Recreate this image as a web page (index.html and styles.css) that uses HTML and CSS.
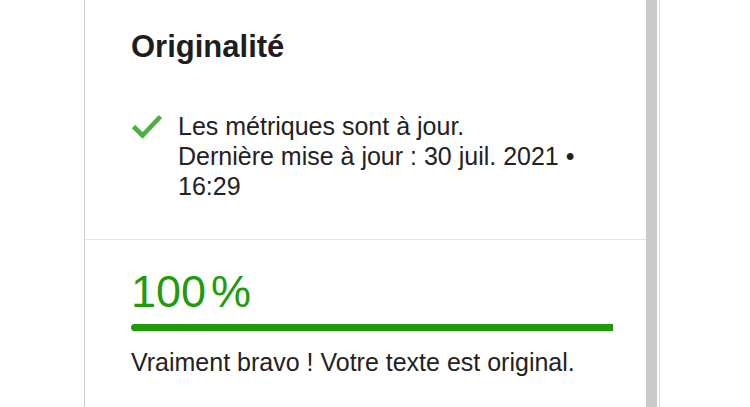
FILE: index.html
```html
<!DOCTYPE html>
<html lang="fr">
<head>
<meta charset="utf-8">
<title>Originalité</title>
<link rel="stylesheet" href="styles.css">
</head>
<body>
<div class="page">
  <section class="panel">
    <div class="top">
      <h2 class="title">Originalité</h2>
      <div class="status">
        <svg class="check" viewBox="0 0 32 26" width="32" height="26" aria-hidden="true">
          <path d="M2.5 13.5 L11.5 22.5 L29.5 3.5" fill="none" stroke="#4caf3f" stroke-width="4.6" stroke-linecap="butt" stroke-linejoin="miter"/>
        </svg>
        <p class="status-text">Les métriques sont à jour.<br>Dernière mise à jour : 30 juil. 2021 • 16:29</p>
      </div>
    </div>
    <div class="bottom">
      <div class="score">100<span class="pct">%</span></div>
      <div class="bar"><div class="bar-fill" style="width:100%"></div></div>
      <p class="message">Vraiment bravo ! Votre texte est original.</p>
    </div>
  </section>
  <div class="scrollbar"></div>
  <div class="edge"></div>
</div>
</body>
</html>
```

FILE: styles.css
```css
* { box-sizing: border-box; }

html, body {
  margin: 0;
  padding: 0;
  background: #ffffff;
}

body {
  font-family: "Liberation Sans", Arial, sans-serif;
  color: #222222;
}

.page {
  display: flex;
  height: 407px;
  padding-left: 84px;
  overflow: hidden;
}

.panel {
  width: 562px;
  border-left: 1px solid #cfcfcf;
  display: flex;
  flex-direction: column;
}

.top {
  padding: 29px 33px 38px 46px;
  border-bottom: 1px solid #e4e4e4;
}

.title {
  margin: 0;
  font-size: 31px;
  line-height: 36px;
  font-weight: 700;
  color: #1e1e1e;
}

.status {
  display: flex;
  align-items: flex-start;
  gap: 15px;
  margin-top: 46px;
}

.check {
  flex: none;
  margin-top: 2px;
}

.status-text {
  margin: 0;
  font-size: 25px;
  line-height: 30px;
  color: #222222;
}

.bottom {
  padding: 27px 33px 0 46px;
}

.score {
  font-size: 45px;
  line-height: 50px;
  color: #1f9b0d;
}

.pct {
  margin-left: 5px;
}

.bar {
  margin-top: 7px;
  height: 7px;
  background: #e6e6e6;
  border-radius: 4px 0 0 4px;
  overflow: hidden;
}

.bar-fill {
  height: 100%;
  background: #1f9b07;
}

.message {
  margin: 16px 0 0;
  font-size: 25px;
  line-height: 30px;
  color: #222222;
}

.scrollbar {
  width: 11px;
  background: #c9c9c9;
  flex: none;
}

.edge {
  width: 1px;
  margin-left: 2px;
  background: #dcdcdc;
  flex: none;
}
```
